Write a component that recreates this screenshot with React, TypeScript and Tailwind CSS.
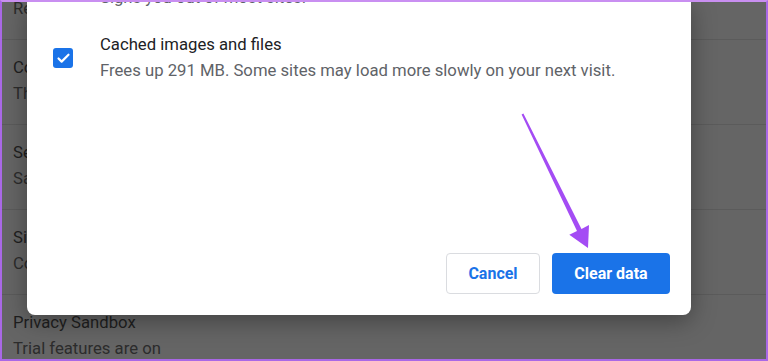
import { Check } from "lucide-react";

const rows = [
  { title: "Clear browsing data", sub: "Review key privacy and security controls" },
  { title: "Cookies and other site data", sub: "Third-party cookies are blocked in Incognito mode" },
  { title: "Security", sub: "Safe Browsing (protection from dangerous sites) and other security settings" },
  { title: "Site Settings", sub: "Controls what information sites can use and show" },
  { title: "Privacy Sandbox", sub: "Trial features are on" },
];

function SettingsList() {
  return (
    <div className="-mt-[46px]">
      {rows.map((row) => (
        <div key={row.title} className="h-[85px] border-t border-[#5b5b5b] px-[13px] pt-[15px]">
          <div className="text-[16.7px] leading-[26px] text-[#1f1f1f] whitespace-nowrap">{row.title}</div>
          <div className="text-[16.7px] leading-[26px] text-[#2c2c2c] whitespace-nowrap">{row.sub}</div>
        </div>
      ))}
    </div>
  );
}

function ClearDataDialog() {
  return (
    <div className="absolute left-[27px] top-0 flex h-[315px] w-[664px] flex-col rounded-b-[8px] bg-white shadow-[0_6px_24px_rgba(0,0,0,0.35)]">
      <div className="-mt-[15px] pl-[73px] text-[16.7px] leading-[26px] text-[#5f6368] whitespace-nowrap">
        Signs you out of most sites.
      </div>

      {/* Cached images item */}
      <div className="mt-[21px] flex items-center pl-[26px]">
        <div className="flex h-[20px] w-[20px] items-center justify-center rounded-[3px] bg-[#1a73e8]">
          <Check className="h-[15px] w-[15px] text-white" strokeWidth={3.5} />
        </div>
        <div className="ml-[27px]">
          <div className="text-[16.7px] leading-[26px] text-[#202124]">Cached images and files</div>
          <div className="text-[16.7px] leading-[26px] text-[#5f6368] whitespace-nowrap">
            Frees up 291 MB. Some sites may load more slowly on your next visit.
          </div>
        </div>
      </div>

      <div className="mt-auto flex justify-end gap-[12px] pb-[21px] pr-[21px]">
        <button className="h-[41px] w-[94px] rounded-[4px] border border-[#dadce0] bg-white text-[16px] font-bold text-[#1a73e8]">
          Cancel
        </button>
        <button className="h-[41px] w-[118px] rounded-[4px] bg-[#1a73e8] text-[16px] font-bold text-white">
          Clear data
        </button>
      </div>
    </div>
  );
}

export default function App() {
  return (
    <div
      className="relative h-[361px] w-[768px] overflow-hidden bg-[#656565]"
      style={{ fontFamily: "Roboto, 'Liberation Sans', sans-serif" }}
    >
      <SettingsList />
      <ClearDataDialog />

      {/* Annotation arrow */}
      <svg className="pointer-events-none absolute left-0 top-0" width="768" height="361">
        <polygon
          points="521.6,114.4 523.4,113.6 581.5,228.9 589,225 588,248 569.3,234.8 577,231.1"
          fill="#a44cf4"
        />
      </svg>

      {/* Purple frame */}
      <div className="pointer-events-none absolute inset-0 border-2 border-[#a968e6] border-t-[#c98ff1]" />
    </div>
  );
}
